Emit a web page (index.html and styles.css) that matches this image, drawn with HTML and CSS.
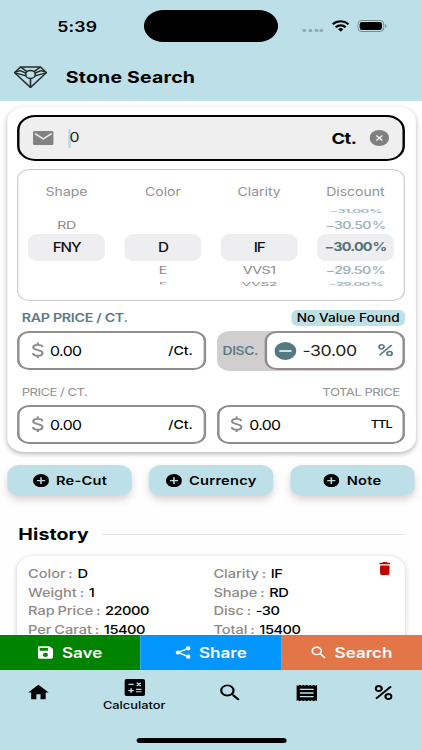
FILE: index.html
```html
<!DOCTYPE html>
<html lang="en">
<head>
<meta charset="utf-8">
<title>Stone Search</title>
<link rel="stylesheet" href="styles.css">
</head>
<body>
<svg class="defs" width="0" height="0">
  <symbol id="dollar" viewBox="0 0 12 20"><path d="M10.600 6.200C10.400 4.300 8.700 3.400 6 3.400S1.500 4.600 1.500 6.500C1.500 8.600 3.500 9.200 6 9.800S10.700 11.200 10.700 13.300 8.800 16.600 6 16.600 1.400 15.500 1.200 13.400M6 .6v3M6 16.400v3" fill="none" stroke="currentColor" stroke-width="2.200"/></symbol>
  <symbol id="plus" viewBox="0 0 24 24"><circle cx="12" cy="12" r="12" fill="#000"/><path d="M12 6v12M6 12h12" stroke="#bde0e8" stroke-width="2.300"/></symbol>
  <symbol id="search" viewBox="0 0 24 24"><path fill="currentColor" d="M15.500 14h-.79l-.28-.27A6.470 6.470 0 0 0 16 9.500 6.500 6.500 0 1 0 9.500 16c1.610 0 3.090-.59 4.230-1.570l.27.28v.79l5 4.990L20.490 19l-4.990-5zm-6 0C7.010 14 5 11.990 5 9.500S7.010 5 9.500 5 14 7.010 14 9.500 11.990 14 9.500 14z"/></symbol>
  <symbol id="percent" viewBox="0 0 18 18"><g fill="none" stroke="currentColor" stroke-width="2.200"><circle cx="4.200" cy="4.200" r="3"/><circle cx="13.800" cy="13.800" r="3"/><path d="M16.400 1.600 1.600 16.400"/></g></symbol>
</svg>
<div class="screen">
  <header class="top">
    <div class="status">
      <span class="time">5:39</span>
      <span class="island"></span>
      <span class="signals">
        <span class="dots"><i></i><i></i><i></i><i></i></span>
        <svg class="wifi" viewBox="0 0 18 13" preserveAspectRatio="none"><g fill="none" stroke="#000" stroke-width="2.300"><path d="M1 4.700a11.400 11.400 0 0 1 16 0"/><path d="M4 7.900a7.200 7.200 0 0 1 10 0"/></g><path d="M9 12.600 6.400 10a3.800 3.800 0 0 1 5.200 0z"/></svg>
        <svg class="battery" viewBox="0 0 30 12" preserveAspectRatio="none"><rect x=".5" y=".5" width="26" height="11" rx="3.500" fill="none" stroke="#758b90"/><rect x="2.300" y="2" width="22.400" height="8" rx="2.300"/><path d="M28 4v4q1.600-.6 1.600-2T28 4" fill="#758b90"/></svg>
      </span>
    </div>
    <div class="titlebar">
      <svg class="gem" viewBox="0 0 27 22"><g fill="none" stroke="#242b2d" stroke-width="1.300" stroke-linejoin="round"><path d="M5.500 1h16L26.300 6.500 13.500 21 .7 6.500z"/><circle cx="13.500" cy="8.300" r="3.900"/><path d="M5.500 1 10.700 5.500M21.500 1l-5.200 4.500M.7 6.500l4.300-2 5 2.500M1 6.700l9 3M26.300 6.500l-4.300-2-5 2.500M26 6.700l-9 3M13.500 12.200V21"/></g></svg>
      <h1>Stone Search</h1>
    </div>
  </header>

  <main>
    <section class="card">
      <div class="weight">
        <svg class="mail" viewBox="0 0 20 14" preserveAspectRatio="none"><rect width="20" height="14" rx="1.600" fill="#828282"/><path d="m2 2.600 8 5.200 8-5.200" fill="none" stroke="#efefef" stroke-width="1.500"/></svg>
        <span class="caret"></span><span class="amount">0</span>
        <b>Ct.</b>
        <svg class="clear" viewBox="0 0 16 16"><circle cx="8" cy="8" r="8" fill="#808080"/><path d="m5.500 5.500 5 5m0-5-5 5" stroke="#f2f2f2" stroke-width="1.100"/></svg>
      </div>

      <div class="picker">
        <div class="wheel"><span class="name">Shape</span><span></span><span class="near">RD</span><span class="pick">FNY</span></div>
        <div class="wheel"><span class="name">Color</span><span></span><span></span><span class="pick">D</span><span class="near">E</span><span class="far cut">F</span></div>
        <div class="wheel"><span class="name">Clarity</span><span></span><span></span><span class="pick">IF</span><span class="near">VVS1</span><span class="far">VVS2</span></div>
        <div class="wheel rate"><span class="name">Discount</span><span class="far">−31.00 %</span><span class="near">−30.50 %</span><span class="pick">−30.00 %</span><span class="near">−29.50 %</span><span class="far">−29.00 %</span></div>
      </div>

      <div class="labels rap"><span class="rap-label">RAP PRICE / CT.</span><span class="chip">No Value Found</span></div>
      <div class="fields">
        <div class="field"><svg class="dollar"><use href="#dollar"/></svg><span class="value">0.00</span><span class="unit">/Ct.</span></div>
        <div class="discount">
          <span class="disc">DISC.</span>
          <div class="field">
            <svg class="minus" viewBox="0 0 18 18"><circle cx="9" cy="9" r="9" fill="#547980"/><path d="M4 9h10" stroke="#fff" stroke-width="1.700"/></svg>
            <span class="value big">-30.00</span><svg class="pct"><use href="#percent"/></svg>
          </div>
        </div>
      </div>
      <div class="labels price"><span>PRICE / CT.</span><span>TOTAL PRICE</span></div>
      <div class="fields">
        <div class="field"><svg class="dollar"><use href="#dollar"/></svg><span class="value">0.00</span><span class="unit">/Ct.</span></div>
        <div class="field"><svg class="dollar"><use href="#dollar"/></svg><span class="value">0.00</span><span class="unit ttl">TTL</span></div>
      </div>
    </section>

    <div class="extras">
      <button><svg><use href="#plus"/></svg>Re-Cut</button>
      <button><svg><use href="#plus"/></svg>Currency</button>
      <button><svg><use href="#plus"/></svg>Note</button>
    </div>

    <div class="history-title"><h2>History</h2><hr></div>
    <section class="history">
      <dl>
        <div><dt>Color :</dt><dd>D</dd></div>
        <div><dt>Weight :</dt><dd>1</dd></div>
        <div><dt>Rap Price :</dt><dd>22000</dd></div>
        <div><dt>Per Carat :</dt><dd>15400</dd></div>
      </dl>
      <dl>
        <div><dt>Clarity :</dt><dd>IF</dd></div>
        <div><dt>Shape :</dt><dd>RD</dd></div>
        <div><dt>Disc :</dt><dd>-30</dd></div>
        <div><dt>Total :</dt><dd>15400</dd></div>
      </dl>
      <svg class="trash" viewBox="0 0 14 18" preserveAspectRatio="none"><path fill="#c00000" d="M1 5h12v11q0 2-2 2H3q-2 0-2-2zM0 1h3.700l1-1h4.600l1 1H14v2H0z"/></svg>
    </section>
  </main>

  <div class="actions">
    <div class="save"><svg viewBox="0 0 18 18"><path fill="#fff" fill-rule="evenodd" d="M2 0h12l4 4v12q0 2-2 2H2q-2 0-2-2V2Q0 0 2 0zM2.200 2.500v4H12v-4zM9 9.500a3 3 0 1 0 0 6 3 3 0 0 0 0-6z"/></svg>Save</div>
    <div class="share"><svg viewBox="0 0 18 18"><g fill="#fff"><circle cx="15" cy="3" r="3"/><circle cx="3" cy="9" r="3"/><circle cx="15" cy="15" r="3"/></g><path d="M15 3 3 9l12 6" fill="none" stroke="#fff" stroke-width="1.900"/></svg>Share</div>
    <div class="find"><svg viewBox="2.500 2.500 18.500 18.500"><use href="#search" width="24" height="24"/></svg>Search</div>
  </div>

  <nav>
    <a class="home"><svg viewBox="2 3 20 17"><path d="M10 20v-6h4v6h5v-8h3L12 3 2 12h3v8z"/></svg></a>
    <a class="calc"><svg viewBox="0 0 18 18"><rect width="18" height="18" rx="2"/><path d="M3.500 5.700h4.600M10.700 4l3.400 3.400m0-3.400-3.400 3.400M3.500 12.200h4.600M5.800 9.900v4.600M10.100 11h4.700M10.100 13.500h4.700" stroke="#bde0e8" stroke-width="1.300"/></svg><span>Calculator</span></a>
    <a class="look"><svg viewBox="2.500 2.500 18.500 18.500"><use href="#search" width="24" height="24"/></svg></a>
    <a class="bill"><svg viewBox="0 0 18 20" preserveAspectRatio="none"><path d="m0 1 1.500 1L3 .800l1.500 1.200L6 .800l1.500 1.200L9 .800l1.500 1.200L12 .800l1.500 1.200L15 .800l1.500 1.200L18 1v18l-1.500-1-1.500 1.200-1.500-1.200-1.500 1.200-1.500-1.200L9 19.200 7.500 18 6 19.200 4.500 18 3 19.200 1.500 18 0 19z"/><path d="M3 6h12M3 10h12M3 14h12" stroke="#bde0e8" stroke-width="1.500"/></svg></a>
    <a class="rates"><svg><use href="#percent"/></svg></a>
  </nav>
  <div class="indicator"></div>
</div>
</body>
</html>
```
FILE: styles.css
```css
* { box-sizing: border-box; }
body { margin: 0; overflow: hidden; background: #fefefe; }
.defs { position: absolute; }
svg { display: block; flex: none; }

.screen {
  width: 346px; height: 750px; overflow: hidden;
  display: flex; flex-direction: column;
  transform: scaleX(1.21965); transform-origin: 0 0;
  font-family: Inter, "Liberation Sans", sans-serif;
  font-size: 12px; color: #000; background: #fefefe;
}

.top { height: 101px; background: #bde0e8; flex: none; }
.status { height: 52px; display: flex; align-items: center; }
.time { width: 118px; padding-left: 47px; font-size: 14.5px; font-weight: 600; letter-spacing: .1px; }
.island { width: 110px; height: 32px; border-radius: 16px; background: #000; }
.signals { display: flex; align-items: center; margin-left: 20.300px; }
.dots { display: flex; gap: 1.700px; margin-top: 8px; }
.dots i { width: 3px; height: 3px; border-radius: 1px; background: #91abb1; }
.wifi { width: 14.700px; height: 12px; margin-left: 6.200px; }
.battery { width: 24.5px; height: 12px; margin-left: 6.500px; }
.titlebar { display: flex; align-items: center; height: 50px; padding-left: 11px; }
.gem { width: 28px; height: 22.500px; }
h1 { margin: 0 0 0 15px; font-size: 16px; font-weight: 650; letter-spacing: .15px; }

main { flex: 1; min-height: 0; overflow: hidden; }
.card {
  margin: 6px 5.500px 0; height: 345px; padding: 8px 8.800px 0;
  border-radius: 14px; background: #fff; box-shadow: 0 2px 5px rgba(0,0,0,.28);
}
.weight {
  height: 46px; border: 2px solid #000; border-radius: 15px; background: #efefef;
  display: flex; align-items: center; padding: 0 11px 0 11px;
}
.mail { width: 17px; height: 14px; }
.caret { width: 1.500px; height: 19px; margin-left: 12px; background: #b5dbe8; }
.amount { margin: 0 0 2px -.8px; font-size: 13px; color: #222; }
.weight b { margin-left: auto; font-size: 15px; font-weight: 750; letter-spacing: -.4px; }
.clear { width: 16px; height: 16px; margin-left: 10.500px; }

.picker {
  height: 132px; margin-top: 8px; border: 1px solid #cfcccd; border-radius: 10px;
  display: grid; grid-template-columns: repeat(4, 63px); justify-content: space-between; padding: 0 7.800px;
}
.wheel {
  display: grid; grid-template-rows: 35px 11px 18px 27px 17px 12px; align-items: center; align-content: start;
  text-align: center; white-space: nowrap; color: #8c8889;
}
.name { padding-top: 8px; font-size: 11.5px; color: #969193; }
.near { transform: scaleY(.88); font-size: 11.700px; letter-spacing: -.4px; }
.far { transform: scaleY(.45); font-size: 11.500px; letter-spacing: -.4px; }
.cut { clip-path: inset(0 0 42% 0); }
.pick { height: 27px; line-height: 27px; border-radius: 8px; background: #eeeef0; color: #111; font-weight: 500; font-size: 12.5px; letter-spacing: -1px; }
.rate { font-weight: 600; color: #a3b5b9; word-spacing: -1.500px; }
.rate .name { font-weight: 400; }
.rate .pick { color: #547178; font-weight: 700; font-size: 11.800px; letter-spacing: -.65px; }
.rate .near { font-size: 11.5px; letter-spacing: -.55px; }
.rate .far { font-size: 11px; letter-spacing: -.75px; }

.labels { display: flex; justify-content: space-between; align-items: center; }
.rap { height: 30px; padding: 4px 0 0 3.500px; }
.rap-label { font-size: 11.700px; font-weight: 600; color: #5b7c83; letter-spacing: -.25px; }
.chip { width: 92.500px; height: 16px; line-height: 16px; border-radius: 5px; background: #bde0e8; text-align: center; font-size: 11.2px; font-weight: 500; white-space: nowrap; }
.price { height: 34px; padding: 8px 4px 0 3.500px; font-size: 10.800px; letter-spacing: -.45px; color: #979293; }
.fields { display: grid; grid-template-columns: 1fr 1fr; gap: 9px; }
.field { height: 39px; border: 2px solid #928c8d; border-radius: 10px; background: #fff; display: flex; align-items: center; padding: 0 8.500px; min-width: 0; }
.dollar { width: 10px; height: 16.500px; margin-left: .8px; color: #8f8a8b; }
.value { margin-left: 5.500px; font-size: 13px; letter-spacing: -.5px; }
.unit { margin-left: auto; font-size: 11.5px; font-weight: 500; }
.ttl { font-size: 10.500px; letter-spacing: -.8px; }
.discount { display: flex; background: #d1cecf; border-radius: 10px; }
.disc { width: 39px; line-height: 40px; text-align: center; font-size: 11.300px; font-weight: 600; letter-spacing: -.3px; color: #5b7c83; }
.discount .field { flex: 1; padding: 0 7px 0 6px; }
.minus { width: 18px; height: 18px; }
.big { font-size: 14.5px; letter-spacing: -.3px; color: #222; }
.pct { width: 12.300px; height: 12.300px; margin-left: auto; color: #547980; }
.pct use, .rates use { width: 100%; height: 100%; }

.extras { margin: 13px 6.300px 0; display: grid; grid-template-columns: repeat(3, 1fr); gap: 14px; }
.extras button {
  height: 31px; padding: 0; border: 0; border-radius: 10px; background: #bde0e8; color: #000;
  display: flex; align-items: center; justify-content: center; gap: 6px;
  font: 600 12px Inter, sans-serif; letter-spacing: .2px; box-shadow: 0 4px 7px rgba(100,60,60,.22);
}
.extras svg { width: 13.300px; height: 13.300px; }
.history-title { height: 38px; margin: 19px 14.500px 0 15px; display: flex; align-items: center; gap: 10px; }
h2 { margin: 0; font-size: 16px; font-weight: 700; letter-spacing: .1px; }
hr { flex: 1; margin: 0; border: 0; border-top: 1px solid #e4e4e4; }
.history { position: relative; height: 110px; margin: 3px 14px 0; padding: 9px 9px; border-radius: 14px; background: #fff; box-shadow: 0 1px 5px rgba(0,0,0,.22); display: grid; grid-template-columns: 152px 1fr; }
dl { margin: 0; }
dl div { display: flex; gap: 3.800px; height: 18.500px; line-height: 18.500px; white-space: nowrap; }
dt { color: #8f8a8b; font-weight: 450; letter-spacing: -.05px; word-spacing: -.8px; }
dd { margin: 0; font-weight: 500; letter-spacing: -.4px; }
.trash { position: absolute; right: 12px; top: 6px; width: 9px; height: 13px; }

.actions { height: 35px; flex: none; display: grid; grid-template-columns: repeat(3, 1fr); color: #fff; font-size: 14px; font-weight: 600; }
.actions div { display: flex; align-items: center; justify-content: center; gap: 7px; }
.actions svg { width: 12.500px; height: 13px; }
.save { background: #008400; }
.share { background: #0496ff; }
.find { background: #e27649; }

nav { height: 68px; flex: none; background: #bde0e8; display: grid; grid-template-columns: 63px 94px 63px 63px 63px; }
nav a { display: flex; flex-direction: column; align-items: center; padding-top: 14px; }
.home svg { width: 17px; height: 16px; }
.calc { padding-top: 9px; }
.calc svg { width: 17px; height: 17px; }
.calc span { margin-top: 3px; font-size: 10.5px; font-weight: 500; line-height: 14px; }
.look svg { width: 17px; height: 17px; }
.bill svg { width: 17px; height: 18px; }
.rates svg { width: 15px; height: 15px; margin-top: 1px; }
.indicator { height: 12px; flex: none; background: #bde0e8; display: flex; justify-content: center; }
.indicator::before { content: ""; width: 123px; height: 5px; border-radius: 3px; background: #000; }
```
